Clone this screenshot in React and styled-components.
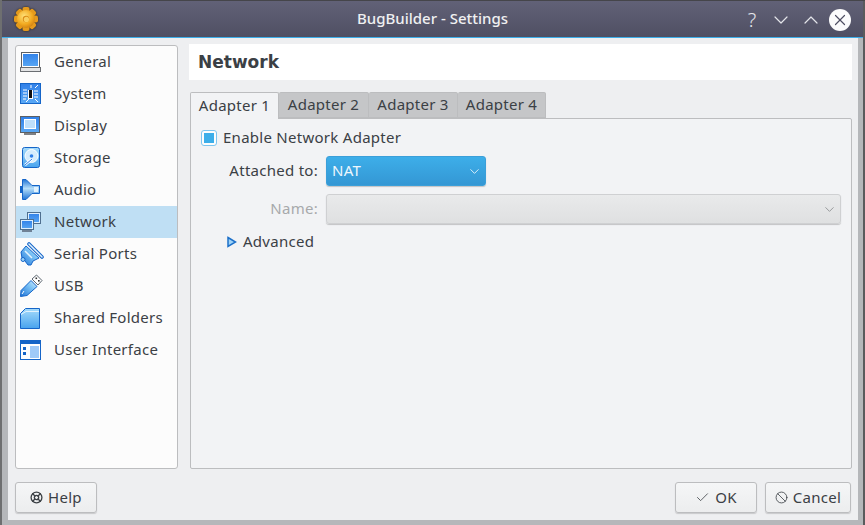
import styled, { createGlobalStyle } from 'styled-components'
import { Check, Ban, LifeBuoy, ChevronDown, ChevronUp, X } from 'lucide-react'

const GlobalStyle = createGlobalStyle`
  body {
    margin: 0;
    font-family: "Noto Sans", "Open Sans", sans-serif;
    font-size: 15px;
    letter-spacing: 0.27px;
    color: #3b4045;
  }
`

const Defs = () => (
  <svg width="0" height="0" style={{ position: 'absolute' }}>
    <defs>
      <linearGradient id="blue" x1="0" y1="0" x2="0" y2="1">
        <stop offset="0" stopColor="#2f7fe8" />
        <stop offset="1" stopColor="#5aa9f5" />
      </linearGradient>
      <linearGradient id="sky" x1="0" y1="0" x2="0" y2="1">
        <stop offset="0" stopColor="#a5dbfb" />
        <stop offset="1" stopColor="#48a3ee" />
      </linearGradient>
      <linearGradient id="horn" x1="0" y1="0" x2="0" y2="1">
        <stop offset="0" stopColor="#1f74d6" />
        <stop offset="0.45" stopColor="#b5def9" />
        <stop offset="1" stopColor="#1f74d6" />
      </linearGradient>
      <linearGradient id="plug" x1="0" y1="1" x2="1" y2="0">
        <stop offset="0" stopColor="#1f74d6" />
        <stop offset="0.6" stopColor="#7cc3f6" />
        <stop offset="1" stopColor="#d9effd" />
      </linearGradient>
      <radialGradient id="gold" cx="0.4" cy="0.35" r="0.75">
        <stop offset="0" stopColor="#ffe27a" />
        <stop offset="0.6" stopColor="#f2a91f" />
        <stop offset="1" stopColor="#c8760f" />
      </radialGradient>
    </defs>
  </svg>
)

const GeneralIcon = () => (
  <svg width="24" height="24" viewBox="0 0 24 24">
    <rect x="2.5" y="2.5" width="18" height="15" fill="url(#blue)" stroke="#5c5f63" />
    <rect x="3.5" y="3.5" width="16" height="13" fill="none" stroke="#fff" />
    <rect x="1.5" y="17.5" width="20" height="4" fill="#e3e4e5" stroke="#6b6e72" />
  </svg>
)

const SystemIcon = () => (
  <svg width="24" height="24" viewBox="0 0 24 24">
    <rect x="1.5" y="1.5" width="20" height="20" fill="url(#blue)" stroke="#1565c8" />
    <path d="M4 8h4M4 11h4M4 14h4M4 17h3M15 9h4M15 12h4M15 15h4M16 6l3-3M7 20l3-3M16 17l3 3M12 3v3" stroke="#fff" />
    <rect x="9" y="8" width="5" height="9" fill="#fff" />
    <rect x="10" y="8" width="3" height="8" fill="#111" />
  </svg>
)

const DisplayIcon = () => (
  <svg width="24" height="24" viewBox="0 0 24 24">
    <rect x="1.5" y="2.5" width="19" height="16" fill="url(#blue)" stroke="#5c5f63" />
    <rect x="5.5" y="5.5" width="11" height="9" fill="#bfe0fb" stroke="#fff" />
    <rect x="5" y="19" width="12" height="2" fill="#7d8084" />
  </svg>
)

const StorageIcon = () => (
  <svg width="24" height="24" viewBox="0 0 24 24">
    <rect x="3.5" y="1.5" width="17" height="20" rx="2" fill="url(#sky)" stroke="#1565c8" />
    <circle cx="12.5" cy="10" r="6.5" fill="#d5ecfc" stroke="#fff" />
    <circle cx="12.5" cy="10" r="1.8" fill="#2f7fe8" />
    <path d="M6 19l7-6" stroke="#fff" strokeWidth="2.4" />
    <path d="M6 19l7-6" stroke="#2f7fe8" strokeWidth="1" />
  </svg>
)

const AudioIcon = () => (
  <svg width="24" height="24" viewBox="0 0 24 24">
    <rect x="1" y="8" width="2" height="7" fill="#1565c8" />
    <path d="M3.5 1.5H7L13 7.5H20.5V15.5H13L7 21.5H3.5Z" fill="url(#horn)" stroke="#1565c8" />
    <rect x="15" y="9" width="4" height="5" fill="#e2f2fd" />
  </svg>
)

const NetworkIcon = () => (
  <svg width="24" height="24" viewBox="0 0 24 24">
    <rect x="8.5" y="2.5" width="13" height="11" fill="url(#blue)" stroke="#4f6f8f" />
    <rect x="9.5" y="3.5" width="11" height="9" fill="none" stroke="#dcefff" />
    <rect x="1.5" y="9.5" width="13" height="10" fill="url(#blue)" stroke="#4f6f8f" />
    <rect x="2.5" y="10.5" width="11" height="8" fill="none" stroke="#dcefff" />
    <rect x="3" y="20" width="10" height="2" fill="#6f8296" />
  </svg>
)

const SerialIcon = () => (
  <svg width="24" height="24" viewBox="0 0 24 24" style={{ overflow: 'visible' }}>
    <path d="M2 10L7 4L20 16L14 19L12 23H9L6 19L3 16Z" fill="url(#plug)" stroke="#1565c8" />
    <path d="M10 2L23 15" stroke="#1565c8" strokeWidth="3.6" strokeLinecap="round" />
    <path d="M10 2L23 15" stroke="#e2f2fd" strokeWidth="1.5" strokeLinecap="round" />
    <circle cx="4" cy="17.5" r="2" fill="#9bd2f8" stroke="#1565c8" />
    <path d="M6 9l7 7" stroke="#e2f2fd" strokeWidth="1.5" />
  </svg>
)

const UsbIcon = () => (
  <svg width="24" height="24" viewBox="0 0 24 24">
    <path d="M1.5 22.5L2 16.5L12 6.5L18 12.5L8 21.5Z" fill="url(#plug)" stroke="#1565c8" />
    <path d="M13 5L17.5 1L23 6.5L19 11Z" fill="#fff" stroke="#5c6670" />
    <rect x="16.5" y="3.5" width="1.6" height="1.6" fill="#333" />
    <rect x="19" y="6" width="1.6" height="1.6" fill="#333" />
    <path d="M3 20l2-3" stroke="#fff" />
  </svg>
)

const FolderIcon = () => (
  <svg width="24" height="24" viewBox="0 0 24 24">
    <path d="M1.5 22.5V7.5L6.5 2.5H20.5V22.5Z" fill="url(#sky)" stroke="#1565c8" />
    <path d="M2 8.5L7 5.5H20" stroke="#e2f2fd" fill="none" />
  </svg>
)

const InterfaceIcon = () => (
  <svg width="24" height="24" viewBox="0 0 24 24">
    <rect x="1.5" y="2.5" width="20" height="19" fill="#fff" stroke="#1565c8" />
    <rect x="2" y="3" width="19" height="3" fill="#1565c8" />
    <rect x="11" y="8" width="9" height="12" fill="#9fcaf8" />
    <rect x="4" y="9" width="3" height="3" fill="#1565c8" />
    <rect x="4" y="14" width="3" height="3" fill="#1565c8" />
  </svg>
)

const GearLogo = () => (
  <svg width="24" height="24" viewBox="0 0 24 24">
    {[0, 45, 90, 135, 180, 225, 270, 315].map((angle) => (
      <rect key={angle} x="8.5" y="0" width="7" height="7" rx="2" fill="#e59a1c" transform={`rotate(${angle} 12 12)`} />
    ))}
    <circle cx="12" cy="12" r="9" fill="url(#gold)" />
    <circle cx="12" cy="12" r="3.2" fill="#d98a16" />
    <circle cx="12.4" cy="12.4" r="2.6" fill="#f9cf5e" />
  </svg>
)

const sections = [
  { label: 'General', Icon: GeneralIcon },
  { label: 'System', Icon: SystemIcon },
  { label: 'Display', Icon: DisplayIcon },
  { label: 'Storage', Icon: StorageIcon },
  { label: 'Audio', Icon: AudioIcon },
  { label: 'Network', Icon: NetworkIcon, active: true },
  { label: 'Serial Ports', Icon: SerialIcon },
  { label: 'USB', Icon: UsbIcon },
  { label: 'Shared Folders', Icon: FolderIcon },
  { label: 'User Interface', Icon: InterfaceIcon },
]

const tabs = [
  { label: 'Adapter 1', width: 89, active: true },
  { label: 'Adapter 2', width: 90 },
  { label: 'Adapter 3', width: 89 },
  { label: 'Adapter 4', width: 88 },
]

const App = () => {
  return (
    <Desktop>
      <GlobalStyle />
      <Defs />
      <TitleBar>
        <Logo><GearLogo /></Logo>
        <Title>BugBuilder - Settings</Title>
        <WindowButtons>
          <HelpMark>?</HelpMark>
          <WindowButton><ChevronDown size={24} strokeWidth={1.2} /></WindowButton>
          <WindowButton><ChevronUp size={24} strokeWidth={1.2} /></WindowButton>
          <CloseButton><X size={18} strokeWidth={1.6} /></CloseButton>
        </WindowButtons>
      </TitleBar>
      <Panel>
        <Main>
          <SideList>
            {sections.map(({ label, Icon, active }) => (
              <SideItem key={label} $active={active}>
                <Icon />
                <ItemLabel>{label}</ItemLabel>
              </SideItem>
            ))}
          </SideList>
          <Content>
            <Header>Network</Header>
            <Tabs>
              {tabs.map(({ label, width, active }) => (
                <Tab key={label} $width={width} $active={active}>{label}</Tab>
              ))}
            </Tabs>
            <Pane>
              <CheckRow>
                <CheckBox />
                <RowText>Enable Network Adapter</RowText>
              </CheckRow>
              <FormRow>
                <FieldLabel>Attached to:</FieldLabel>
                <Combo $primary>
                  <RowText>NAT</RowText>
                  <ChevronDown size={15} strokeWidth={1.4} />
                </Combo>
              </FormRow>
              <FormRow>
                <FieldLabel $disabled>Name:</FieldLabel>
                <Combo $wide>
                  <span />
                  <ChevronDown size={15} strokeWidth={1.4} />
                </Combo>
              </FormRow>
              <Advanced>
                <svg width="10" height="12" viewBox="0 0 10 12">
                  <path d="M1 1.5L8.5 6L1 10.5Z" fill="#9fd3f7" stroke="#1d70c9" strokeWidth="1.5" />
                </svg>
                <RowText>Advanced</RowText>
              </Advanced>
            </Pane>
          </Content>
        </Main>
        <Footer>
          <Button $width={82}><LifeBuoy size={13} strokeWidth={2.4} /><RowText>Help</RowText></Button>
          <FooterRight>
            <Button $width={82}><Check size={15} strokeWidth={1.3} /><RowText>OK</RowText></Button>
            <Button $width={86}><Ban size={13} strokeWidth={1.5} /><RowText>Cancel</RowText></Button>
          </FooterRight>
        </Footer>
      </Panel>
    </Desktop>
  )
}

export default App

const Desktop = styled.div`
  width: 865px;
  height: 525px;
  box-sizing: border-box;
  padding: 1px 2px 0;
  background: #b5b7ba;
  display: flex;
  flex-direction: column;
  overflow: hidden;
  box-shadow: inset 2px 0 0 #6e6f70, inset 0 1px 0 #45454a, inset -2px 0 0 #5a5b5d;
`

const TitleBar = styled.div`
  height: 37px;
  flex: none;
  box-sizing: border-box;
  position: relative;
  display: flex;
  align-items: center;
  justify-content: center;
  background: linear-gradient(#616177, #4f4f63);
  border-bottom: 1px solid #3daee9;
`

const Logo = styled.div`
  position: absolute;
  left: 12px;
  top: 6px;
  height: 24px;
  filter: drop-shadow(0 0 1px #2a2218);
`

const Title = styled.div`
  color: #eff0f1;
  font-weight: 500;
  font-size: 15px;
  letter-spacing: 0;
  margin-top: -2px;
`

const WindowButtons = styled.div`
  position: absolute;
  right: 12px;
  top: 7px;
  display: flex;
  align-items: center;
  color: #e4e5ea;
`

const HelpMark = styled.span`
  font-size: 20px;
  width: 20px;
  text-align: center;
  line-height: 24px;
  font-weight: 300;
  margin-right: 7px;
`

const WindowButton = styled.span`
  display: flex;
  width: 24px;
  height: 24px;
  margin-right: 6px;
`

const CloseButton = styled.span`
  width: 22px;
  height: 22px;
  border-radius: 50%;
  background: #fbfbfc;
  color: #4f4f63;
  display: flex;
  align-items: center;
  justify-content: center;
`

const Panel = styled.div`
  flex: 1;
  margin: 0 5px 5px 6px;
  padding: 6px 6px 7px 7px;
  background: #eeeff1;
  display: flex;
  flex-direction: column;
`

const Main = styled.div`
  display: flex;
  gap: 11px;
  flex: 1;
`

const SideList = styled.div`
  width: 163px;
  height: 424px;
  box-sizing: border-box;
  margin-top: 1px;
  border: 1px solid #bcbdbf;
  border-radius: 3px;
  background: #fcfcfc;
`

const SideItem = styled.div`
  height: 32px;
  display: flex;
  align-items: center;
  padding-left: 3px;
  gap: 11px;
  background: ${({ $active }) => ($active ? '#bfdff4' : 'transparent')};

  svg {
    flex: none;
  }
`

const ItemLabel = styled.span`
  margin-top: -2px;
`

const RowText = styled.span`
  margin-top: -2px;
`

const Content = styled.div`
  flex: 1;
  display: flex;
  flex-direction: column;
`

const Header = styled.div`
  height: 36px;
  flex: none;
  box-sizing: border-box;
  padding-left: 9px;
  background: #fff;
  display: flex;
  align-items: center;
  font-family: "DejaVu Sans", sans-serif;
  font-size: 17px;
  letter-spacing: 0;
  font-weight: 700;
`

const Tabs = styled.div`
  display: flex;
  margin: 12px 0 0 1px;
  position: relative;
  z-index: 1;
`

const Tab = styled.div`
  width: ${({ $width }) => $width}px;
  height: ${({ $active }) => ($active ? '27px' : '26px')};
  margin-bottom: ${({ $active }) => ($active ? '-1px' : '0')};
  box-sizing: border-box;
  display: flex;
  align-items: center;
  justify-content: center;
  padding-bottom: 2px;
  background: ${({ $active }) => ($active ? '#f2f3f5' : '#c5c6c8')};
  border: 1px solid #bcbdbf;
  border-bottom: ${({ $active }) => ($active ? '0' : '1px solid #bcbdbf')};
  border-left: ${({ $active }) => ($active ? '1px solid #bcbdbf' : '0')};
  border-radius: 2px 2px 0 0;
`

const Pane = styled.div`
  flex: 1;
  margin-left: 1px;
  box-sizing: border-box;
  padding: 11px 10px 0 10px;
  background: #f2f3f5;
  border: 1px solid #bcbdbf;
  border-radius: 0 2px 2px 2px;
`

const CheckRow = styled.div`
  display: flex;
  align-items: center;
  gap: 6px;
  height: 16px;
`

const CheckBox = styled.span`
  width: 16px;
  height: 16px;
  box-sizing: border-box;
  border: 1px solid #7ec5ef;
  border-radius: 3px;
  background: #fdfdfd;
  padding: 2px;

  &::before {
    content: '';
    display: block;
    width: 10px;
    height: 10px;
    background: #3daee9;
  }
`

const FormRow = styled.div`
  display: flex;
  align-items: center;
  gap: 8px;
  margin-top: 8px;

  ${CheckRow} + & {
    margin-top: 10px;
  }
`

const FieldLabel = styled.div`
  width: 117px;
  margin-top: -2px;
  text-align: right;
  color: ${({ $disabled }) => ($disabled ? '#a7a9ab' : 'inherit')};
`

const Combo = styled.div`
  width: ${({ $wide }) => ($wide ? '515px' : '160px')};
  height: 30px;
  box-sizing: border-box;
  padding: 0 3px 0 5px;
  display: flex;
  align-items: center;
  justify-content: space-between;
  border-radius: 3px;
  color: ${({ $primary }) => ($primary ? '#eef7fd' : '#8d8f91')};
  background: ${({ $primary }) =>
    $primary ? 'linear-gradient(#3daee9, #3497d4)' : 'linear-gradient(#e9eaeb, #dfe0e1)'};
  border: 1px solid ${({ $primary }) => ($primary ? '#3b9fd9' : '#cfd0d2')};
  box-shadow: 0 1px 1px #c2c3c5;
`

const Advanced = styled.div`
  display: flex;
  align-items: center;
  gap: 6px;
  margin: 9px 0 0 26px;
`

const Footer = styled.div`
  margin-top: 13px;
  padding-right: 1px;
  display: flex;
  justify-content: space-between;
`

const FooterRight = styled.div`
  display: flex;
  gap: 8px;
`

const Button = styled.div`
  width: ${({ $width }) => $width}px;
  height: 31px;
  box-sizing: border-box;
  display: flex;
  align-items: center;
  justify-content: center;
  gap: 5px;
  border: 1px solid #bcbdbf;
  border-radius: 3px;
  background: linear-gradient(#f5f6f7, #ecedee);
  box-shadow: 0 1px 1px #c8c9cb;
`
